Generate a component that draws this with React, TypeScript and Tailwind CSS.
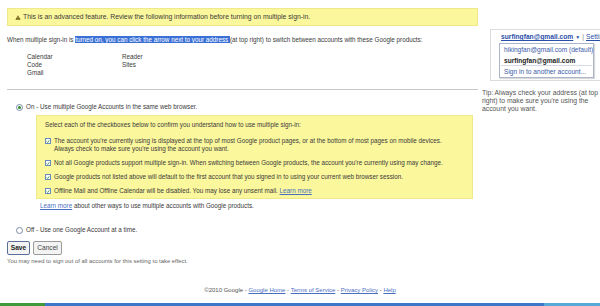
import React from "react";

const font = { fontFamily: '"Liberation Sans", Arial, sans-serif' };

const Check = () => (
  <span className="inline-flex items-center justify-center w-[6px] h-[6px] border border-[#6a8ab8] bg-white shrink-0 mt-[1px]">
    <svg viewBox="0 0 6 6" className="w-[5px] h-[5px]">
      <path d="M1 3 L2.5 4.5 L5 1.2" fill="none" stroke="#2a8a2a" strokeWidth="1.2" />
    </svg>
  </span>
);

const Radio = ({ on }: { on?: boolean }) => (
  <span className="inline-flex items-center justify-center w-[7px] h-[7px] rounded-full border border-[#7a8aa8] bg-white shrink-0">
    {on && <span className="w-[3px] h-[3px] rounded-full bg-[#2a8a2a]" />}
  </span>
);

export default function App() {
  const checks = [
    [
      "The account you're currently using is displayed at the top of most Google product pages, or at the bottom of most pages on mobile devices.",
      "Always check to make sure you're using the account you want.",
    ],
    [
      "Not all Google products support multiple sign-in. When switching between Google products, the account you're currently using may change.",
    ],
    [
      "Google products not listed above will default to the first account that you signed in to using your current web browser session.",
    ],
  ];

  return (
    <div className="w-[600px] h-[306px] overflow-hidden bg-white flex flex-col text-[6.3px] leading-[8px] text-[#3a3a3a]" style={font}>
      <div className="flex flex-1">
        {/* main column */}
        <div className="w-[478px] pl-[7px] pt-[8px] flex flex-col shrink-0">
          <div className="h-[18px] bg-[#fbf79c] border border-[#efe98a] flex items-center pl-[7px] gap-[2px] text-[6.8px]">
            <svg viewBox="0 0 8 7" className="w-[6px] h-[5px]">
              <path d="M4 0.3 L7.7 6.7 L0.3 6.7 Z" fill="#6b5a10" />
              <rect x="3.6" y="2.3" width="0.8" height="2.5" fill="#fbf79c" />
              <rect x="3.6" y="5.3" width="0.8" height="0.8" fill="#fbf79c" />
            </svg>
            <span>This is an advanced feature. Review the following information before turning on multiple sign-in.</span>
          </div>

          <div className="mt-[10px] h-[8px]">
            When multiple sign-in is{" "}
            <span className="bg-[#3a6fd6] text-white">turned on, you can click the arrow next to your address </span>
            (at top right) to switch between accounts with these Google products:
          </div>

          <div className="mt-[9px] ml-[20px] grid grid-cols-[95px_auto]">
            <div className="flex flex-col">
              <span>Calendar</span>
              <span>Code</span>
              <span>Gmail</span>
            </div>
            <div className="flex flex-col">
              <span>Reader</span>
              <span>Sites</span>
            </div>
          </div>

          <div className="mt-[12px] h-[1px] bg-[#c8c8c8]" />

          <div className="mt-[13px] ml-[9px] flex items-center gap-[3px] h-[8px]">
            <Radio on />
            <span>On - Use multiple Google Accounts in the same web browser.</span>
          </div>

          <div className="mt-[4px] ml-[29px] w-[437px] h-[84px] bg-[#fbf79c] border border-[#efe98a] pl-[8px] pt-[5px] flex flex-col">
            <span>Select each of the checkboxes below to confirm you understand how to use multiple sign-in:</span>
            <div className="mt-[8px] flex flex-col gap-[6px]">
              {checks.map((lines, i) => (
                <div key={i} className="flex gap-[3px]">
                  <Check />
                  <div className="flex flex-col">
                    {lines.map((l) => (
                      <span key={l}>{l}</span>
                    ))}
                  </div>
                </div>
              ))}
              <div className="flex gap-[3px]">
                <Check />
                <span>
                  Offline Mail and Offline Calendar will be disabled. You may lose any unsent mail.{" "}
                  <a className="text-[#4a6fbf] underline">Learn more</a>
                </span>
              </div>
            </div>
          </div>

          <div className="mt-[3px] ml-[33px] h-[8px]">
            <a className="text-[#4a6fbf] underline">Learn more</a> about other ways to use multiple accounts with Google products.
          </div>

          <div className="mt-[16px] ml-[9px] flex items-center gap-[3px] h-[8px]">
            <Radio />
            <span>Off - Use one Google Account at a time.</span>
          </div>

          <div className="mt-[7px] flex gap-[3px]">
            <button className="h-[14px] w-[23px] border border-[#5a6f9a] rounded-[2px] bg-[#f3f3f3] text-[#222] text-[6.6px] leading-[12px] font-bold">
              Save
            </button>
            <button className="h-[14px] w-[29px] border border-[#9a9a9a] rounded-[2px] bg-[#f3f3f3] text-[#444] text-[6.6px] leading-[12px]">
              Cancel
            </button>
          </div>

          <div className="mt-[3px] text-[5.9px] leading-[7px] text-[#666]">
            You may need to sign out of all accounts for this setting to take effect.
          </div>
        </div>

        {/* right column */}
        <div className="flex-1 flex flex-col pt-[29px] pl-[4px] min-w-0">
          <div className="ml-[8px] border border-[#dcdcdc] border-r-0 h-[52px] pl-[8px] pt-[3px] whitespace-nowrap overflow-hidden">
            <div className="ml-[2px] flex items-center gap-[2px] h-[8px] text-[6.7px]">
              <a className="text-[#2a4fa8] underline font-bold">surfingfan@gmail.com</a>
              <span className="text-[#2a4fa8] text-[5px]">▼</span>
              <span className="text-[#888]">|</span>
              <a className="text-[#2a4fa8] underline">Settings</a>
            </div>
            <div className="mt-[2px] w-[95px] border border-[#aab4cc] bg-white flex flex-col text-[6.6px] shadow-[1px_1px_1px_rgba(0,0,0,0.15)]">
              <span className="pl-[4px] h-[11px] leading-[11px] text-[#3a5aa8]">hikingfan@gmail.com (default)</span>
              <span className="pl-[4px] h-[10px] leading-[11px] font-bold text-[#222]">surfingfan@gmail.com</span>
              <div className="h-[1px] bg-[#d6dbe6] mx-[1px]" />
              <span className="pl-[4px] h-[11px] leading-[11px] text-[#3a5aa8]">Sign in to another account...</span>
            </div>
          </div>
          <div className="mt-[8px] w-[125px] text-[6.8px] text-[#555]">
            Tip: Always check your address (at top right) to make sure you're using the account you want.
          </div>
        </div>
      </div>

      <div className="h-[17px] flex justify-center items-start text-[6px] text-[#555]">
        <span>
          ©2010 Google - <a className="text-[#4a6fbf] underline">Google Home</a> -{" "}
          <a className="text-[#4a6fbf] underline">Terms of Service</a> -{" "}
          <a className="text-[#4a6fbf] underline">Privacy Policy</a> -{" "}
          <a className="text-[#4a6fbf] underline">Help</a>
        </span>
      </div>
      <div className="h-[3px] flex">
        <div className="w-[45px] bg-[#3f9a3a]" />
        <div className="flex-1 bg-[#3d78c8]" />
        <div className="w-[56px] bg-[#5aa8d8]" />
      </div>
    </div>
  );
}
